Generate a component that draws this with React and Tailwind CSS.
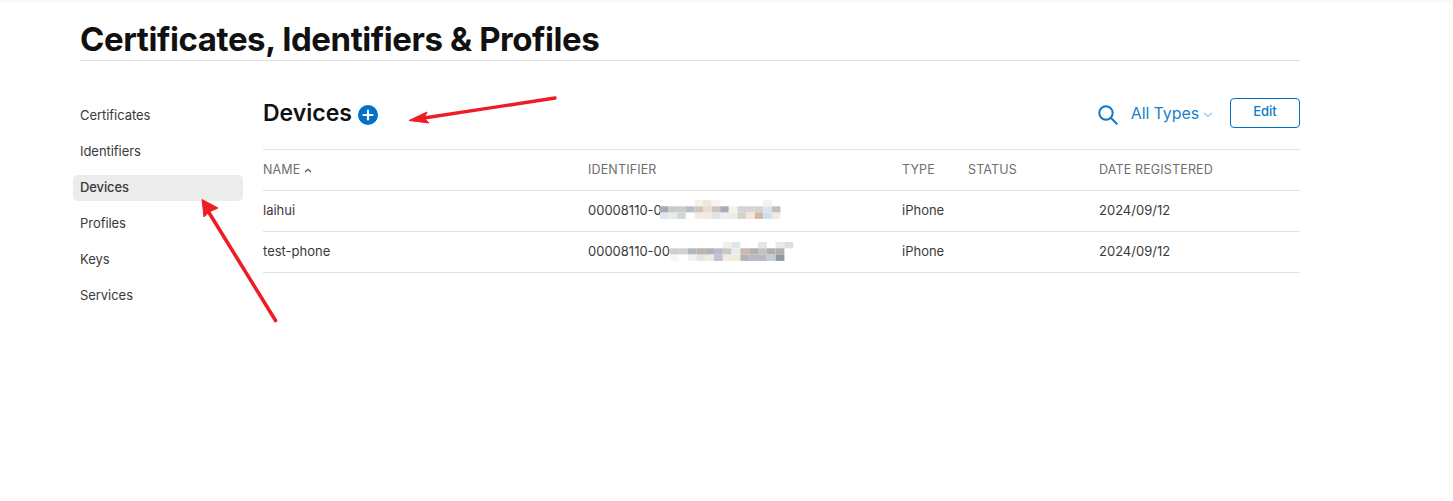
import React from "react";

const nav = ["Certificates", "Identifiers", "Devices", "Profiles", "Keys", "Services"];

const mosaicA = [
  [4,0,"#f8f2ec"],[5,0,"#f0e6da"],[6,0,"#f8f4f0"],[12,0,"#eef3f8"],
  [0,1,"#a9a9b4"],[1,1,"#c4cccb"],[2,1,"#c8ccd0"],[3,1,"#b9bdca"],[4,1,"#d0c6c0"],[5,1,"#e8ddd2"],[6,1,"#c9c7c6"],[7,1,"#aaaab4"],[8,1,"#f7f3ec"],[9,1,"#d3d5d0"],[10,1,"#d8d4d0"],[11,1,"#d8d0cb"],[12,1,"#d8e3ee"],[13,1,"#c4bdb6"],
  [0,2,"#dfe6ee"],[1,2,"#e6ebe6"],[2,2,"#d4d6d2"],[3,2,"#ffffff"],[4,2,"#f4ebe4"],[5,2,"#f2e8de"],[6,2,"#e4e2e2"],[7,2,"#eeeeee"],[8,2,"#efebe0"],[9,2,"#d2d2c8"],[10,2,"#f3e6dc"],[11,2,"#cdb8aa"],[12,2,"#cfdcec"],[13,2,"#ecebea"],
];
const mosaicB = [
  [6,0,"#f0f0ef"],[7,0,"#e4e6e6"],[10,0,"#e2e4e6"],[12,0,"#f0e6e4"],[13,0,"#e4dcd8"],
  [0,1,"#cfcfd0"],[1,1,"#d0d0d0"],[2,1,"#b2b8c2"],[3,1,"#b9b4b4"],[4,1,"#b3b0b2"],[5,1,"#b8bcca"],[6,1,"#cfc8c0"],[7,1,"#e4eef2"],[8,1,"#c8bab0"],[9,1,"#b5b0a8"],[10,1,"#c0c4c0"],[11,1,"#b0adaa"],[12,1,"#aeaeb0"],
  [0,2,"#f7f7f7"],[1,2,"#ffffff"],[2,2,"#f2f2f2"],[3,2,"#e6e4e2"],[4,2,"#ecebea"],[5,2,"#bcc3d2"],[6,2,"#f0ece4"],[7,2,"#f4e8d8"],[8,2,"#b4b2b2"],[9,2,"#b8bac0"],[10,2,"#b4bac4"],[11,2,"#c8ccd0"],[12,2,"#8f99a4"],
];

function Mosaic({ cells, cw, top }) {
  return (
    <svg width="130" height="24" className="absolute left-0" style={{ top }} aria-hidden="true">
      {cells.map(([x, y, c]) => (
        <rect key={`${x}-${y}`} x={x * cw} y={y * 6.3} width={cw} height="6.3" fill={c} />
      ))}
    </svg>
  );
}

function Row({ name, id, cells, mosaicLeft, cw, top }) {
  return (
    <div className="grid grid-cols-[325px_314px_66px_131px_1fr] h-[41px] items-center border-b border-[#e2e2e2] text-[13px] text-[#3a3a3a]">
      <div>{name}</div>
      <div className="relative h-full flex items-center">
        {id}
        <div className="absolute top-0" style={{ left: mosaicLeft }}>
          <Mosaic cells={cells} cw={cw} top={top} />
        </div>
      </div>
      <div>iPhone</div>
      <div />
      <div>2024/09/12</div>
    </div>
  );
}

export default function App() {
  return (
    <div className="relative h-[501px] bg-white overflow-hidden font-['Inter','Liberation_Sans',sans-serif]">
      <div className="h-[3px] bg-[#f9f9f9]" />
      <div className="w-[1220px] ml-[80px]">
        <h1 className="h-[58px] pt-[15px] border-b border-[#dedede] text-[33px] leading-[43px] font-bold text-[#111111] tracking-[-0.43px] whitespace-nowrap">
          Certificates, Identifiers &amp; Profiles
        </h1>
        <div className="flex mt-[36px]">
          <nav className="w-[197px] shrink-0 flex flex-col pt-[1px] -ml-[7px] mr-[-7px]">
            {nav.map((item) => (
              <div key={item} className={item === "Devices"
                ? "w-[170px] h-[26px] my-[5px] px-[7px] flex items-center rounded-[5px] bg-[#ececec] text-[13px] font-medium text-[#3a3a3a] tracking-[-0.1px]"
                : "h-[36px] px-[7px] flex items-center text-[13px] text-[#3a3a3a] tracking-[-0.05px]"}>
                {item}
              </div>
            ))}
          </nav>
          <main className="flex-1 min-w-0 -mt-[1px]">
            <div className="h-[53px] flex items-start justify-between pt-[1px]">
              <div className="flex items-center gap-[6px] h-[32px]">
                <span className="text-[23px] leading-[32px] font-semibold text-[#111111]">Devices</span>
                <svg width="20" height="20" viewBox="0 0 20 20" className="mt-[3px]" aria-hidden="true">
                  <circle cx="10" cy="10" r="10" fill="#0070c9" />
                  <path d="M10 5.5v9M5.5 10h9" stroke="white" strokeWidth="2.2" strokeLinecap="round" />
                </svg>
              </div>
              <div className="flex items-center h-[30px] mt-[1px]">
                <svg width="22" height="22" viewBox="0 0 22 22" className="mt-[3px] mr-[12px]" fill="none" stroke="#0f78c8" strokeWidth="2" strokeLinecap="round" aria-hidden="true">
                  <circle cx="9" cy="9" r="6.7" />
                  <path d="M14 14l5.7 5.7" />
                </svg>
                <span className="text-[16px] text-[#1a7fc9] tracking-[-0.1px]">All Types</span>
                <svg width="10" height="6" viewBox="0 0 10 6" className="ml-[4px] mt-[3px] mr-[17px]" fill="none" stroke="#9cc4e4" strokeWidth="1.2" aria-hidden="true">
                  <path d="M1 1l4 3.5L9 1" />
                </svg>
                <button className="w-[70px] h-[30px] rounded-[4px] border border-[#0070c9] text-[13px] font-medium text-[#0f78c8] pb-[2px]">Edit</button>
              </div>
            </div>
            <div className="border-t border-[#e2e2e2]">
              <div className="grid grid-cols-[325px_314px_66px_131px_1fr] h-[41px] items-center border-b border-[#e2e2e2] text-[12.5px] text-[#6e6e73] tracking-[0.15px]">
                <div className="flex items-center gap-[4px]">
                  NAME
                  <svg width="8" height="5" viewBox="0 0 8 5" fill="none" stroke="#555555" strokeWidth="1.2" aria-hidden="true"><path d="M1 4l3-2.8L7 4" /></svg>
                </div>
                <div>IDENTIFIER</div>
                <div>TYPE</div>
                <div>STATUS</div>
                <div>DATE REGISTERED</div>
              </div>
              <Row name="laihui" id="00008110-0" cells={mosaicA} mosaicLeft="72px" cw={8.6} top={9} />
              <Row name="test-phone" id="00008110-00" cells={mosaicB} mosaicLeft="82px" cw={8.8} top={10} />
            </div>
          </main>
        </div>
      </div>
      <svg className="absolute inset-0 pointer-events-none" width="1453" height="501" aria-hidden="true">
        <path d="M555 98L424 118" stroke="#ee1c25" strokeWidth="3.4" strokeLinecap="round" />
        <path d="M409 120.5L427 112L424 118L429 123Z" fill="#ee1c25" stroke="#ee1c25" strokeLinejoin="round" />
        <path d="M275.5 320.5L208 211" stroke="#ee1c25" strokeWidth="3.6" strokeLinecap="round" />
        <path d="M202 199.5L218 208L209 212L204 217Z" fill="#ee1c25" stroke="#ee1c25" strokeLinejoin="round" />
      </svg>
    </div>
  );
}
